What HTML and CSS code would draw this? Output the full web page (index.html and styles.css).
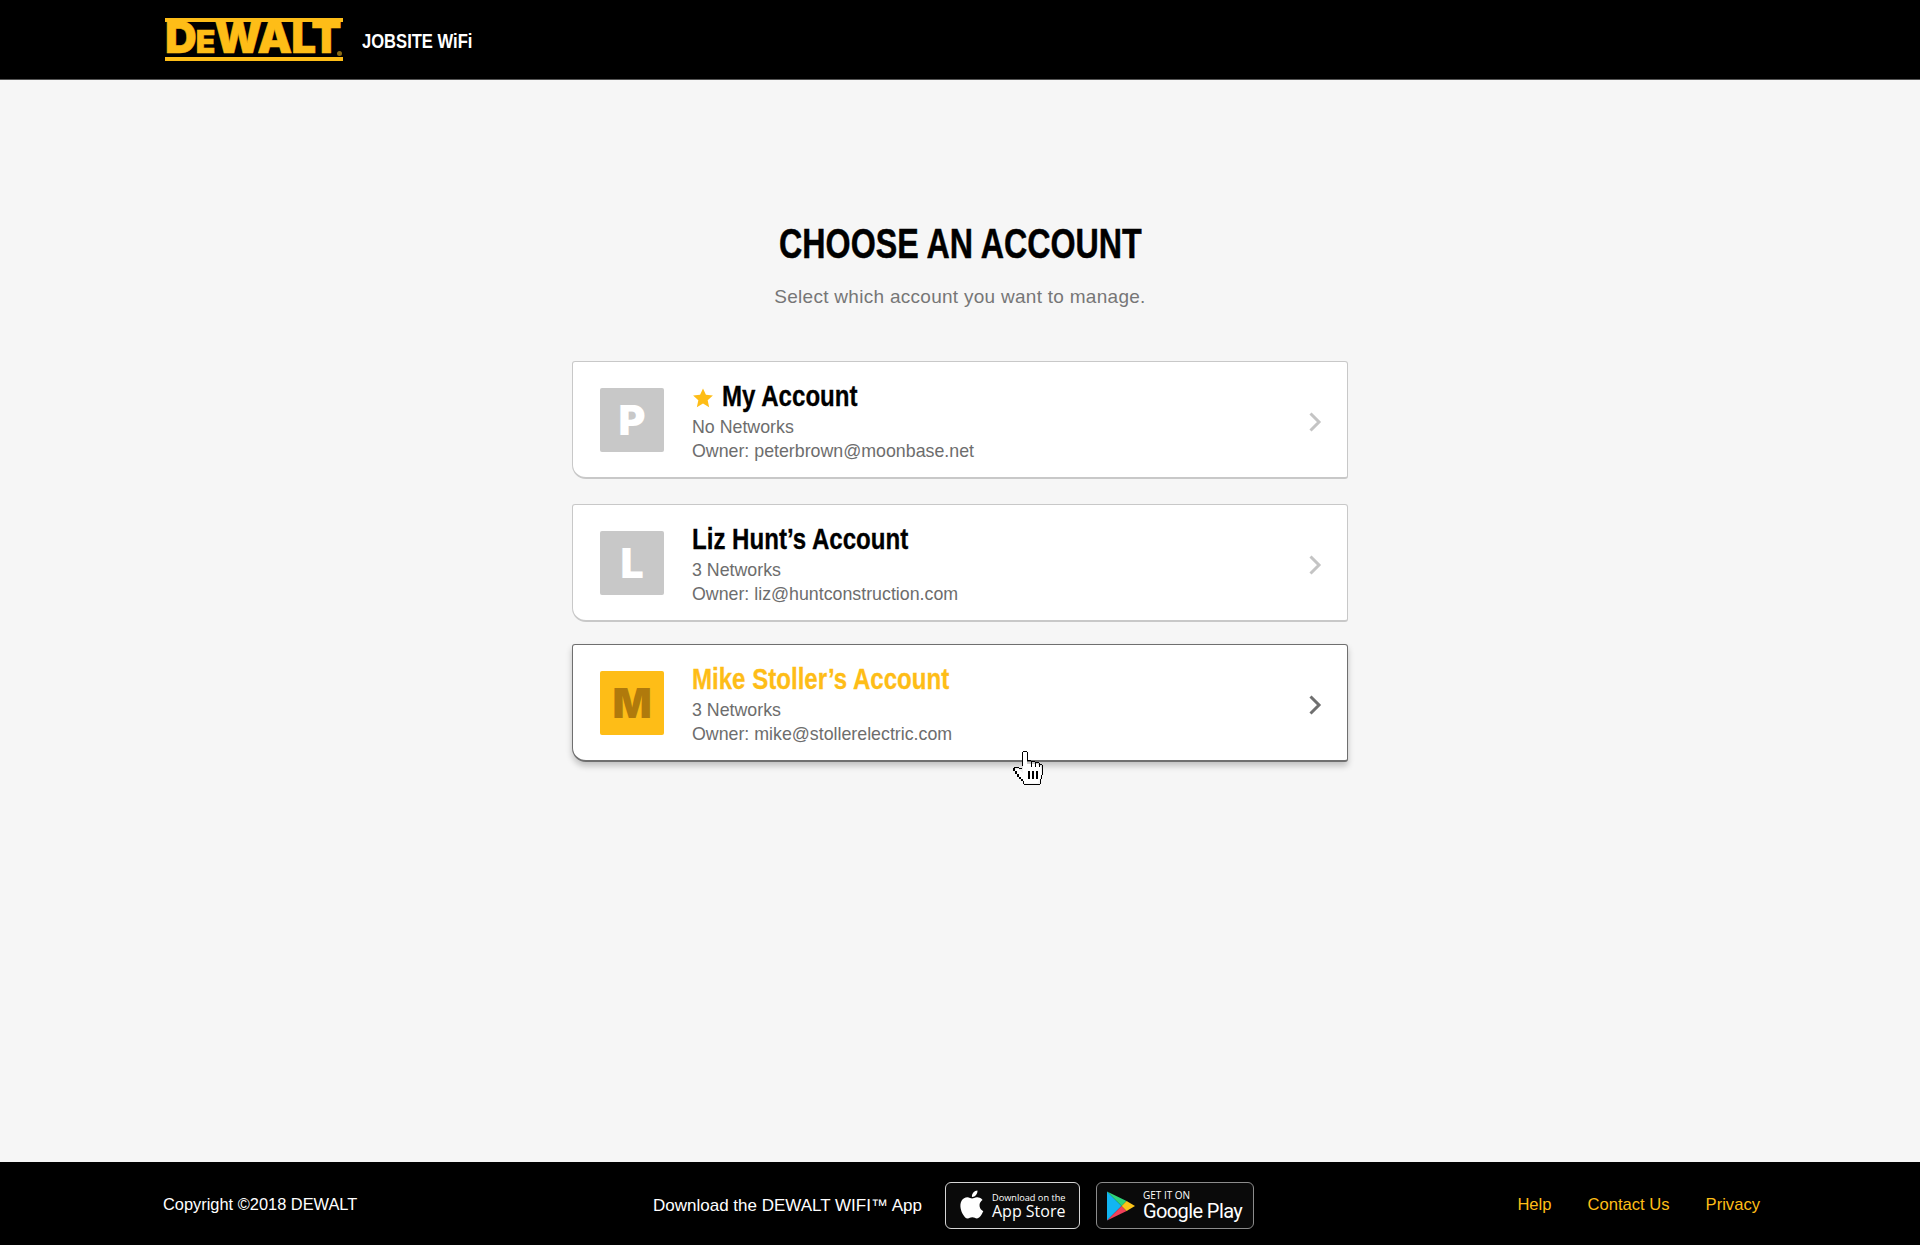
FILE: index.html
```html
<!DOCTYPE html>
<html lang="en">
<head>
<meta charset="utf-8">
<title>DEWALT Jobsite WiFi</title>
<link rel="stylesheet" href="styles.css">
</head>
<body>
<div class="page">
  <header class="header">
    <div class="logo"><span class="logo-text">D<span class="logo-e">E</span>WALT</span><span class="logo-reg"></span></div>
    <div class="product"><span class="product-text">JOBSITE WiFi</span></div>
  </header>
  <main class="main">
    <h1 class="title"><span class="title-text">CHOOSE AN ACCOUNT</span></h1>
    <p class="subtitle">Select which account you want to manage.</p>
    <div class="list">
      <a class="card">
        <div class="avatar">P</div>
        <div class="info">
          <div class="name"><svg class="star" viewBox="0 0 24 24"><path d="M12 1.500l3.200 7 7.600.8-5.700 5.100 1.600 7.600L12 18.100 5.300 22l1.600-7.600L1.200 9.300l7.600-.8z"/></svg><span class="name-text">My Account</span></div>
          <div class="meta">No Networks</div>
          <div class="meta">Owner: peterbrown@moonbase.net</div>
        </div>
        <svg class="chev" viewBox="0 0 14 22"><path d="M2.500 2.500L11 11l-8.500 8.500"/></svg>
      </a>
      <a class="card">
        <div class="avatar">L</div>
        <div class="info">
          <div class="name"><span class="name-text">Liz Hunt’s Account</span></div>
          <div class="meta">3 Networks</div>
          <div class="meta">Owner: liz@huntconstruction.com</div>
        </div>
        <svg class="chev" viewBox="0 0 14 22"><path d="M2.500 2.500L11 11l-8.500 8.500"/></svg>
      </a>
      <a class="card card-active">
        <div class="avatar">M</div>
        <div class="info">
          <div class="name"><span class="name-text">Mike Stoller’s Account</span></div>
          <div class="meta">3 Networks</div>
          <div class="meta">Owner: mike@stollerelectric.com</div>
        </div>
        <svg class="chev" viewBox="0 0 14 22"><path d="M2.500 2.500L11 11l-8.500 8.500"/></svg>
        <svg class="cursor" viewBox="0 0 32 36" shape-rendering="crispEdges"><path class="cursor-fill" d="M10 2h4v12h10l4 3v10l-3 7H11l-8-9-2-4 3-2 6 5z"/><path class="cursor-line" d="M10 1h4v1h-4zM9 2h1v14H9zM14 2h1v9h-1zM15 10h3v1h-3zM18 11h1v6h-1zM19 11h3v1h-3zM22 12h1v5h-1zM23 12h3v1h-3zM26 13h1v4h-1zM27 14h2v1h-2zM29 15h1v11h-1zM28 26h1v4h-1zM27 30h1v5h-1zM11 35h16v1H11zM10 32h1v3h-1zM8 30h2v2H8zM6 28h2v2H6zM4 25h2v3H4zM2 22h2v3H2zM0 19h2v3H0zM1 17h5v2H1zM6 18h3v2H6zM15 22h2v8h-2zM19 22h2v8h-2zM23 22h2v8h-2z"/></svg>
      </a>
    </div>
  </main>
  <footer class="footer">
    <div class="copy">Copyright ©2018 DEWALT</div>
    <div class="download">
      <span class="download-label">Download the DEWALT WIFI™ App</span>
      <div class="badge badge-apple">
        <svg class="apple" viewBox="0 0 24 28"><path d="M17.600 14.700c0-3 2.500-4.500 2.600-4.600-1.400-2.100-3.600-2.300-4.400-2.400-1.900-.2-3.600 1.100-4.600 1.100s-2.400-1.100-4-1.100c-2 0-3.900 1.200-5 3-2.100 3.700-.5 9.200 1.500 12.200 1 1.500 2.200 3.100 3.800 3 1.500-.1 2.100-1 3.900-1s2.400 1 4 1 2.700-1.500 3.700-2.900c1.200-1.700 1.600-3.300 1.700-3.400-.1 0-3.200-1.200-3.200-4.900zM14.600 5.800c.8-1 1.400-2.400 1.200-3.800-1.200 0-2.600.8-3.500 1.800-.8.900-1.400 2.300-1.200 3.700 1.300.1 2.700-.7 3.500-1.700z"/></svg>
        <div class="badge-text"><span class="badge-small">Download on the</span><span class="badge-big">App Store</span></div>
      </div>
      <div class="badge badge-google">
        <svg class="play" viewBox="0 0 25 28"><path fill="#12b5f2" d="M0 1v26l13-13z"/><path fill="#2fd47a" d="M0 1l13 13 4.500-4.500z"/><path fill="#f0405a" d="M0 27l13-13 4.500 4.500z"/><path fill="#fcc419" d="M17.500 9.500L13 14l4.500 4.500L25 14z"/></svg>
        <div class="badge-text"><span class="badge-small badge-small-g">GET IT ON</span><span class="badge-big badge-big-g">Google Play</span></div>
      </div>
    </div>
    <nav class="links"><a>Help</a><a>Contact Us</a><a>Privacy</a></nav>
  </footer>
</div>
</body>
</html>
```

FILE: styles.css
```css
* { box-sizing: border-box; }
html, body { margin: 0; height: 100%; }
body { background: #f6f6f6; font-family: "Liberation Sans", Arial, sans-serif; color: #6d6d6d; }
.page { height: 1245px; display: flex; flex-direction: column; overflow: hidden; }

.header { height: 80px; background: #000; border-bottom: 1px solid #555; display: flex; align-items: center; padding-left: 165px; flex: none; }
.logo { position: relative; width: 178px; height: 43px; border-top: 4px solid #febd17; border-bottom: 4px solid #febd17; display: flex; align-items: center; }
.logo-text { font-family: Inter, "Liberation Sans", sans-serif; font-weight: 900; font-size: 44px; line-height: 35px; color: #febd17; letter-spacing: -1px; -webkit-text-stroke: .5px #febd17; white-space: nowrap; }
.logo-e { font-size: 32px; }
.logo-reg { position: absolute; right: 1px; bottom: 1px; width: 5px; height: 5px; border-radius: 50%; background: #8a6a14; }
.product { margin-left: 19px; margin-top: 3px; font-weight: 700; font-size: 19.5px; color: #fff; }
.product-text { display: inline-block; transform: scaleX(.85); transform-origin: left center; white-space: nowrap; }

.main { flex: 1; display: flex; flex-direction: column; align-items: center; padding-top: 140px; }
.title { margin: 0; font-weight: 700; font-size: 42px; line-height: 48px; color: #000; }
.title-text { display: inline-block; transform: scaleX(.767); -webkit-text-stroke: .5px #000; white-space: nowrap; }
.subtitle { margin: 18px 0 0; font-size: 19px; line-height: 22px; letter-spacing: .28px; color: #767676; }
.list { width: 776px; margin-top: 53px; display: flex; flex-direction: column; gap: 25px; }
.list .card:last-child { margin-top: -3px; }

.card { position: relative; height: 118px; background: #fff; border: 1px solid #c8c8c8; border-bottom: 2px solid #c8c8c8; border-radius: 3px 3px 3px 14px; display: flex; align-items: center; padding-left: 27px; padding-right: 25px; }
.card-active { border: 1px solid #6f6f6f; border-bottom: 2px solid #6f6f6f; box-shadow: 0 4px 6px rgba(0,0,0,.22); }
.avatar { width: 64px; height: 64px; flex: none; background: #c8c8c8; border-radius: 2px; color: #fff; font-family: Inter, "Liberation Sans", sans-serif; font-weight: 900; font-size: 41px; display: flex; align-items: center; justify-content: center; }
.card-active .avatar { background: #febd17; color: #b07a0c; }
.info { margin-left: 28px; margin-top: 1px; flex: 1; }
.name { display: flex; align-items: center; font-weight: 700; font-size: 29px; line-height: 38px; color: #000; }
.name-text { display: inline-block; transform: scaleX(.83); transform-origin: left center; -webkit-text-stroke: .3px currentColor; white-space: nowrap; }
.card-active .name { color: #febd17; }
.star { width: 22px; height: 22px; margin-right: 8px; margin-top: 3px; fill: #febd17; flex: none; }
.meta { font-size: 17.8px; line-height: 24px; color: #6d6d6d; }
.chev { width: 14px; height: 22px; flex: none; margin-top: 4px; fill: none; stroke: #c4c4c4; stroke-width: 3; }
.card-active .chev { stroke: #6f6f6f; }
.cursor { position: absolute; left: 440px; top: 105px; width: 32px; height: 35px; }
.cursor-fill { fill: #fff; }
.cursor-line { fill: #000; }

.footer { height: 83px; flex: none; background: #000; color: #fff; position: relative; display: flex; align-items: center; justify-content: space-between; padding: 0 160px 0 163px; font-size: 16.6px; }
.copy { margin-top: 2px; font-size: 16.4px; }
.download { position: absolute; left: 653px; top: 20px; display: flex; align-items: center; font-size: 17px; }
.download-label { margin-right: 23px; }
.badge { height: 47px; background: #0a0a0a; border-radius: 6px; display: flex; align-items: center; color: #fff; }
.badge-apple { width: 135px; border: 1px solid #d6d6d6; padding-left: 13px; }
.badge-google { width: 158px; margin-left: 16px; border: 1px solid #8c8c8c; padding-left: 10px; }
.apple { width: 28px; height: 33px; fill: #fff; flex: none; margin-right: 5px; margin-top: -2px; }
.play { width: 28px; height: 32px; flex: none; margin-right: 8px; }
.badge-text { display: flex; flex-direction: column; margin-top: 1px; font-family: "Open Sans", "Liberation Sans", sans-serif; }
.badge-small { font-size: 9.200px; line-height: 11px; white-space: nowrap; }
.badge-big { font-size: 16px; line-height: 17px; white-space: nowrap; }
.badge-small-g { font-size: 10px; }
.badge-big-g { font-size: 20px; line-height: 21px; letter-spacing: -.6px; font-family: Roboto, sans-serif; }
.links { display: flex; gap: 36px; color: #febd17; margin-top: 2px; }
```
